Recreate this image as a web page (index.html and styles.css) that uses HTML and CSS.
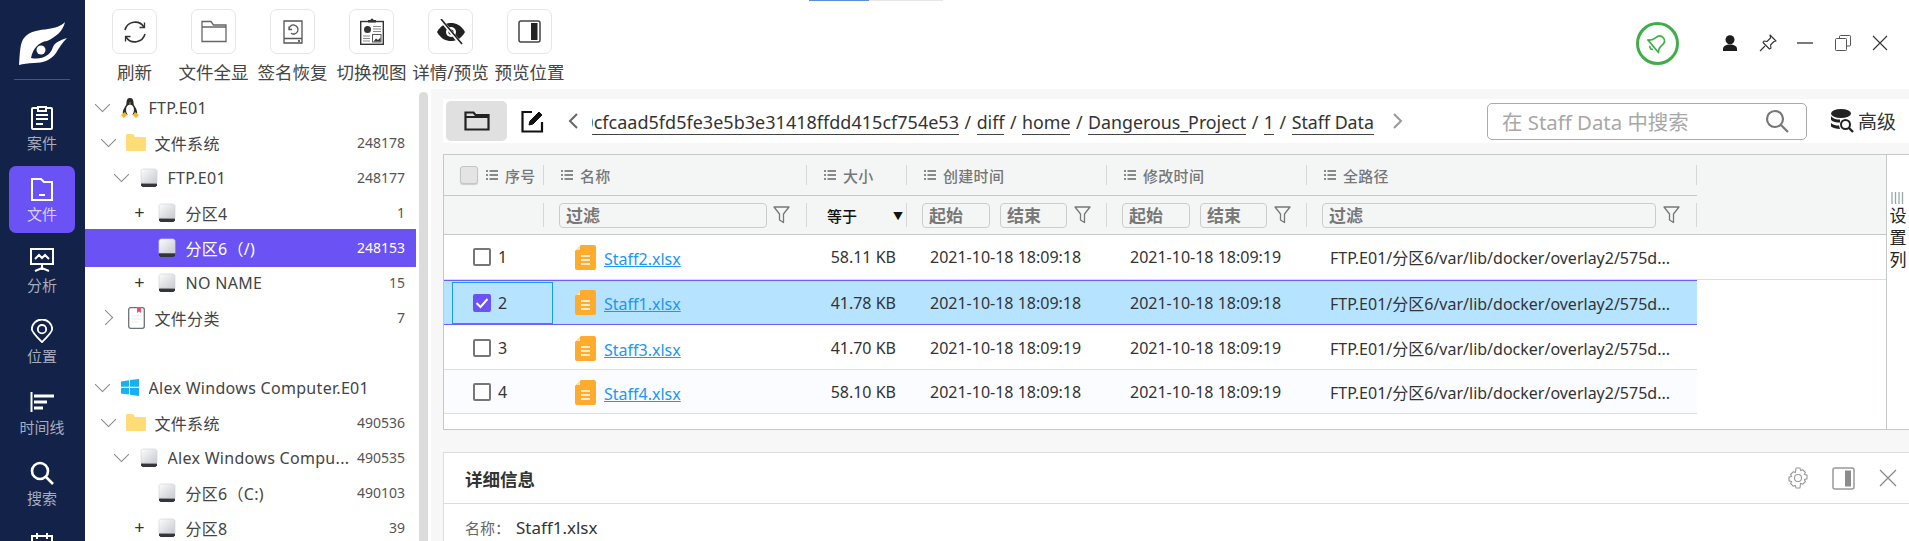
FILE: index.html
```html
<!DOCTYPE html>
<html lang="zh">
<head>
<meta charset="utf-8">
<title>文件</title>
<link rel="stylesheet" href="styles.css">
</head>
<body>
<svg class="sprite" aria-hidden="true">
  <symbol id="drive" viewBox="0 0 18 20">
    <defs><linearGradient id="dg" x1="0" y1="0" x2="1" y2="1"><stop offset="0" stop-color="#fdfdfd"/><stop offset="1" stop-color="#c6c9cf"/></linearGradient></defs>
    <path d="M2.500 1h13l1.500 1.500V15H1V2.500z" fill="url(#dg)" stroke="#d3d5d9" stroke-width=".7"/>
    <path d="M1 15.500h16v2l-1.500 1.500h-13L1 17.500z" fill="#33353a"/>
  </symbol>
  <symbol id="folderY" viewBox="0 0 20 17">
    <path d="M0 1.500C0 .6.600 0 1.500 0h5.500l2 3h9.500C19.400 3 20 3.600 20 4.500V15.500c0 .9-.6 1.500-1.500 1.500h-17C.6 17 0 16.400 0 15.500z" fill="#ffdc75"/>
  </symbol>
  <symbol id="list" viewBox="0 0 12 10">
    <path d="M0 1h2M3.500 1H12M0 5h2M3.500 5H12M0 9h2M3.500 9H12" stroke="#666" stroke-width="1.400" fill="none"/>
  </symbol>
  <symbol id="funnel" viewBox="0 0 17 18">
    <path d="M1 1h15l-5.500 7v8.500l-4-2.500V8z" fill="none" stroke="#777" stroke-width="1.300" stroke-linejoin="round"/>
  </symbol>
  <symbol id="xls" viewBox="0 0 21 25">
    <path d="M6 0h13a2 2 0 0 1 2 2v21a2 2 0 0 1-2 2H2a2 2 0 0 1-2-2V6z" fill="#ffab2e"/>
    <path d="M5 1v4H1z" fill="#ffe3b0"/>
    <path d="M6 11h9M6 15h9M6 19h9" stroke="#fff" stroke-width="1.400"/>
  </symbol>
</svg>

<div class="progress"><span class="progress-on"></span><span class="progress-off"></span></div>

<div class="app">
  <nav class="side">
    <div class="logo">
      <svg width="85" height="79" viewBox="0 0 85 79">
        <path d="M19 65C20 52 20 43 24 38 29 31 40 30 48 29 55 28 61 26 65 22 63 31 56 37 47 41 39 42 33 48 31 58 42 60 50 56 53 47 55 42 61 40 67 38 62 43 59 48 56 53 51 60 43 63 34 63 28 63 23 64 19 65z" fill="#fff"/>
        <circle cx="41" cy="50" r="4.500" fill="#fff"/>
      </svg>
      <div class="logo-rule"></div>
    </div>
    <a class="nav-item">
      <svg width="24" height="24" viewBox="0 0 24 24" fill="none" stroke="#fff" stroke-width="2"><path d="M8 2H3a1 1 0 0 0-1 1v19a1 1 0 0 0 1 1h18a1 1 0 0 0 1-1V3a1 1 0 0 0-1-1h-5M8 1h8v4H8zM6 9h12M6 13h12M6 18h7"/></svg>
      <span>案件</span>
    </a>
    <a class="nav-item nav-on">
      <svg width="24" height="24" viewBox="0 0 24 24" fill="none" stroke="#fff" stroke-width="2"><path d="M2 2h9l3 3h8v18H2zM9 18h6"/></svg>
      <span>文件</span>
    </a>
    <a class="nav-item">
      <svg width="26" height="24" viewBox="0 0 26 24" fill="none" stroke="#fff" stroke-width="2"><path d="M2 1h22v15H2zM13 16v6M6 23l7-3 7 3"/><path d="M6 11l4-4 3 3 3-3 4 4"/></svg>
      <span>分析</span>
    </a>
    <a class="nav-item">
      <svg width="24" height="26" viewBox="0 0 24 26" fill="none" stroke="#fff" stroke-width="2"><path d="M12 25C5 18 1 14 1 11a11 10.500 0 0 1 22 0c0 3-4 7-11 14z"/><circle cx="12" cy="11" r="4.500"/></svg>
      <span>位置</span>
    </a>
    <a class="nav-item">
      <svg width="25" height="20" viewBox="0 0 25 20" fill="none" stroke="#fff" stroke-width="3"><path d="M4 4h20M4 10h13M4 16h9"/><path d="M1.500 0v20" stroke-width="2"/></svg>
      <span>时间线</span>
    </a>
    <a class="nav-item">
      <svg width="24" height="24" viewBox="0 0 24 24" fill="none" stroke="#fff" stroke-width="2.600"><circle cx="10" cy="10" r="8"/><path d="M16 16l7 7"/></svg>
      <span>搜索</span>
    </a>
    <a class="nav-item">
      <svg width="22" height="24" viewBox="0 0 22 24" fill="none" stroke="#fff" stroke-width="2"><path d="M1 4h20v18H1zM6 1v6M16 1v6"/></svg>
    </a>
  </nav>

  <div class="body">
    <header class="top">
      <div class="tool">
        <div class="tool-btn"><svg width="26" height="26" viewBox="0 0 26 26" fill="none" stroke="#333" stroke-width="1.600"><path d="M3 11A10.500 10.500 0 0 1 22 8M23 15A10.500 10.500 0 0 1 4 18"/><path d="M22.500 3.500V8.500H17.500M3.500 22.500V17.500H8.500" stroke-width="1.300"/></svg></div>
        <span>刷新</span>
      </div>
      <div class="tool">
        <div class="tool-btn"><svg width="26" height="23" viewBox="0 0 26 23" fill="none" stroke="#666" stroke-width="1.300"><path d="M1 21.500V1.500h9l2.500 3.500H25v16.500zM1 7h24"/></svg></div>
        <span>文件全显</span>
      </div>
      <div class="tool">
        <div class="tool-btn"><svg width="20" height="24" viewBox="0 0 20 24" fill="none" stroke="#555" stroke-width="1.300"><path d="M1 1h18v22H1zM1 18.500h18"/><path d="M6 9.500a4.500 4.500 0 1 1 2 3.700M6 6.500v3h3"/><path d="M15 21h2" stroke="#333" stroke-width="1.500"/></svg></div>
        <span>签名恢复</span>
      </div>
      <div class="tool">
        <div class="tool-btn"><svg width="24" height="27" viewBox="0 0 24 27"><rect x=".7" y="3.500" width="22.600" height="22.800" fill="#fff" stroke="#333" stroke-width="1.400"/><path d="M8 4.500V2h2.500a1.500 1.500 0 0 1 3 0H16v2.500z" fill="#333"/><circle cx="7.500" cy="11.500" r="3.500" fill="#333"/><path d="M13 8.500h8M13 11h8M13 13.500h8M3 18h7M3 20.500h7M3 23h7" stroke="#888" stroke-width="1.200"/><rect x="12.500" y="16.500" width="8.500" height="7.500" fill="#fff" stroke="#555"/><path d="M13.500 23.500l2.500-3 2 1.500 2.500-2.500v4z" fill="#333"/></svg></div>
        <span>切换视图</span>
      </div>
      <div class="tool">
        <div class="tool-btn"><svg width="28" height="26" viewBox="0 0 28 26"><path d="M0 13C4 6 9 4 14 4s10 2 14 9c-4 7-9 9-14 9S4 20 0 13z" fill="#222"/><circle cx="14" cy="13" r="5" fill="#fff"/><circle cx="14" cy="13" r="2.600" fill="#222"/><path d="M4 1l20 24" stroke="#fff" stroke-width="3.500"/><path d="M4 0l21 25" stroke="#222" stroke-width="1.600"/></svg></div>
        <span>详情/预览</span>
      </div>
      <div class="tool">
        <div class="tool-btn"><svg width="23" height="23" viewBox="0 0 23 23"><rect x="1" y="1" width="21" height="21" rx="2" fill="#fff" stroke="#444" stroke-width="1.500"/><rect x="13" y="3" width="6.500" height="17" fill="#222"/></svg></div>
        <span>预览位置</span>
      </div>
      <div class="win">
        <div class="bell"><svg width="22" height="22" viewBox="0 0 20 20" fill="none" stroke="#3fae49" stroke-width="1.500" stroke-linejoin="round"><g transform="rotate(50 10 10)"><path d="M10 2.500C6.500 2.500 5.500 5 5.500 8c0 3-1 5-3 6.500h15c-2-1.500-3-3.500-3-6.500 0-3-1-5.500-4.500-5.500z"/><path d="M8 16.500a2.200 2.200 0 0 0 4 0"/></g></svg></div>
        <div class="win-btn"><svg width="16" height="16" viewBox="0 0 16 16" fill="#1c1c1c"><circle cx="8" cy="4.700" r="4.500"/><path d="M1 16v-2c0-3 3-4.500 7-4.500s7 1.500 7 4.500v2z"/></svg></div>
        <div class="win-btn"><svg width="18" height="18" viewBox="0 0 18 18" fill="none" stroke="#333" stroke-width="1.100" stroke-linejoin="round"><path d="M11 1l6 6-2 .5-3.500 3.500.5 3-1.500 1L4 8.500l1-1.500 3 .5L11.500 4z"/><path d="M6 12l-5 5"/></svg></div>
        <div class="win-btn"><svg width="16" height="16" viewBox="0 0 16 16" stroke="#333" stroke-width="1.300"><path d="M0 8h16"/></svg></div>
        <div class="win-btn"><svg width="16" height="16" viewBox="0 0 16 16" fill="#fff" stroke="#555" stroke-width="1"><path d="M4.500 11V1.500a1 1 0 0 1 1-1h9a1 1 0 0 1 1 1V10a1 1 0 0 1-1 1z"/><rect x=".5" y="3.500" width="11" height="12" rx="1"/></svg></div>
        <div class="win-btn"><svg width="16" height="16" viewBox="0 0 16 16" stroke="#333" stroke-width="1.100"><path d="M1 1l14 14M15 1L1 15"/></svg></div>
      </div>
    </header>

    <div class="content">
      <aside class="tree">
        <div class="row l1">
          <span class="tg chev-d"></span>
          <span class="ti"><svg width="18" height="20" viewBox="0 0 18 20"><path d="M9 0c2.500 0 3.500 2 3.500 4.500 0 2.500 1 3.500 2.500 6 1 2 1.500 4 1 6H2c-.5-2 0-4 1-6 1.500-2.500 2.500-3.500 2.500-6C5.500 2 6.500 0 9 0z" fill="#2a2a2a"/><ellipse cx="9" cy="12" rx="4" ry="5.500" fill="#fff"/><path d="M0 17l4-3 2 3-3 3zM18 17l-4-3-2 3 3 3zM8 4.500h2L9 6z" fill="#f5b81f"/></svg></span>
          <span class="tx">FTP.E01</span>
        </div>
        <div class="row l2">
          <span class="tg chev-d"></span>
          <span class="ti"><svg width="20" height="17"><use href="#folderY"/></svg></span>
          <span class="tx">文件系统</span><span class="ct">248178</span>
        </div>
        <div class="row l3">
          <span class="tg chev-d"></span>
          <span class="ti"><svg width="18" height="20"><use href="#drive"/></svg></span>
          <span class="tx">FTP.E01</span><span class="ct">248177</span>
        </div>
        <div class="row l4">
          <span class="tg plus">+</span>
          <span class="ti"><svg width="18" height="20"><use href="#drive"/></svg></span>
          <span class="tx">分区4</span><span class="ct">1</span>
        </div>
        <div class="row l4 row-on">
          <span class="tg"></span>
          <span class="ti"><svg width="18" height="20"><use href="#drive"/></svg></span>
          <span class="tx">分区6（/)</span><span class="ct">248153</span>
        </div>
        <div class="row l4">
          <span class="tg plus">+</span>
          <span class="ti"><svg width="18" height="20"><use href="#drive"/></svg></span>
          <span class="tx">NO NAME</span><span class="ct">15</span>
        </div>
        <div class="row l2">
          <span class="tg chev-r"></span>
          <span class="ti"><svg width="17" height="22" viewBox="0 0 17 22"><rect x=".7" y=".7" width="15.600" height="20.600" rx="2" fill="#fff" stroke="#6b7278" stroke-width="1.300"/><path d="M9 0h4v6l-2-1.500L9 6z" fill="#ef4d6d"/><path d="M3.500 9h10M3.500 12h10M3.500 15h7" stroke="#e3ebf3"/></svg></span>
          <span class="tx">文件分类</span><span class="ct">7</span>
        </div>
        <div class="row"></div>
        <div class="row l1">
          <span class="tg chev-d"></span>
          <span class="ti"><svg width="18" height="17" viewBox="0 0 18 17" fill="#16b1f0"><path d="M0 2.500L8 1.300v6.500H0zM9 1.100L18 0v7.800H9zM0 9h8v6.500L0 14.500zM9 9h9v8L9 15.800z"/></svg></span>
          <span class="tx">Alex Windows Computer.E01</span>
        </div>
        <div class="row l2">
          <span class="tg chev-d"></span>
          <span class="ti"><svg width="20" height="17"><use href="#folderY"/></svg></span>
          <span class="tx">文件系统</span><span class="ct">490536</span>
        </div>
        <div class="row l3">
          <span class="tg chev-d"></span>
          <span class="ti"><svg width="18" height="20"><use href="#drive"/></svg></span>
          <span class="tx">Alex Windows Compu...</span><span class="ct">490535</span>
        </div>
        <div class="row l4">
          <span class="tg"></span>
          <span class="ti"><svg width="18" height="20"><use href="#drive"/></svg></span>
          <span class="tx">分区6（C:)</span><span class="ct">490103</span>
        </div>
        <div class="row l4">
          <span class="tg plus">+</span>
          <span class="ti"><svg width="18" height="20"><use href="#drive"/></svg></span>
          <span class="tx">分区8</span><span class="ct">39</span>
        </div>
      </aside>
      <div class="scroll"><div class="scroll-thumb"></div></div>

      <main class="main">
        <div class="crumbs">
          <div class="folder-btn"><svg width="26" height="20" viewBox="0 0 26 20" fill="none" stroke="#222" stroke-width="2.200"><path d="M1.500 18.500V1.500h8l2 2.500h13v14.500zM1.500 6h23"/></svg></div>
          <svg class="edit" width="23" height="23" viewBox="0 0 23 23" fill="none" stroke="#111" stroke-width="2.200"><path d="M11 2H1.500v19.500H21V12"/><path d="M8 15l1-4L18 2l3 3-9 9z" fill="#111" stroke-width="1"/></svg>
          <svg class="chev" width="10" height="16" viewBox="0 0 10 16" fill="none" stroke="#666" stroke-width="2"><path d="M9 1L2 8l7 7"/></svg>
          <div class="path">
            <a class="hash">b50cfcaad5fd5fe3e5b3e31418ffdd415cf754e53</a><i>/</i><a>diff</a><i>/</i><a>home</a><i>/</i><a>Dangerous_Project</a><i>/</i><a>1</a><i>/</i><a>Staff Data</a>
          </div>
          <svg class="chev2" width="10" height="16" viewBox="0 0 10 16" fill="none" stroke="#999" stroke-width="2"><path d="M1 1l7 7-7 7"/></svg>
          <div class="search">
            <span>在 Staff Data 中搜索</span>
            <svg width="24" height="24" viewBox="0 0 24 24" fill="none" stroke="#777" stroke-width="2.200"><circle cx="10" cy="10" r="8"/><path d="M16 16l7 7"/></svg>
          </div>
          <div class="adv">
            <svg width="24" height="24" viewBox="0 0 24 24"><ellipse cx="11" cy="4.500" rx="10" ry="4.500" fill="#222"/><path d="M1 7c2 3 6 3.500 9 3.500v3C6 13.500 3 13 1 11zM1 14c2 2 5 2.500 8 2.500l1 3.500c-4 0-7-1-9-2.500z" fill="#222"/><circle cx="15.500" cy="15.500" r="4.500" fill="#fff" stroke="#222" stroke-width="2"/><path d="M19 19l4 4" stroke="#222" stroke-width="2.400"/></svg>
            <span>高级</span>
          </div>
        </div>

        <section class="grid-wrap">
          <div class="grid">
            <div class="g-head">
              <div class="h-cell c1"><span class="chk chk-head"></span><svg class="li" width="12" height="10"><use href="#list"/></svg>序号</div>
              <div class="h-cell c2"><svg class="li" width="12" height="10"><use href="#list"/></svg>名称</div>
              <div class="h-cell c3"><svg class="li" width="12" height="10"><use href="#list"/></svg>大小</div>
              <div class="h-cell c4"><svg class="li" width="12" height="10"><use href="#list"/></svg>创建时间</div>
              <div class="h-cell c4"><svg class="li" width="12" height="10"><use href="#list"/></svg>修改时间</div>
              <div class="h-cell c6"><svg class="li" width="12" height="10"><use href="#list"/></svg>全路径</div>
            </div>
            <div class="g-filter">
              <div class="f-cell c1"></div>
              <div class="f-cell c2"><span class="inp grow">过滤</span><svg class="fn" width="17" height="18"><use href="#funnel"/></svg></div>
              <div class="f-cell c3"><span class="eq">等于</span><span class="arr">▼</span></div>
              <div class="f-cell c4"><span class="inp w68">起始</span><span class="inp w67">结束</span><svg class="fn" width="17" height="18"><use href="#funnel"/></svg></div>
              <div class="f-cell c4"><span class="inp w68">起始</span><span class="inp w67">结束</span><svg class="fn" width="17" height="18"><use href="#funnel"/></svg></div>
              <div class="f-cell c6"><span class="inp grow">过滤</span><svg class="fn" width="17" height="18"><use href="#funnel"/></svg></div>
            </div>
            <div class="g-row">
              <div class="d c1"><span class="chk"></span>1</div>
              <div class="d c2"><svg class="xl" width="21" height="25"><use href="#xls"/></svg><a class="lnk">Staff2.xlsx</a></div>
              <div class="d c3 num">58.11 KB</div>
              <div class="d c4">2021-10-18 18:09:18</div>
              <div class="d c4">2021-10-18 18:09:19</div>
              <div class="d c6">FTP.E01/分区6/var/lib/docker/overlay2/575d...</div>
            </div>
            <div class="g-row g-sel">
              <div class="d c1 focus"><span class="chk chk-on"><svg width="14" height="12" viewBox="0 0 14 12" fill="none" stroke="#fff" stroke-width="2"><path d="M1.500 6l4 4 7-8"/></svg></span>2</div>
              <div class="d c2"><svg class="xl" width="21" height="25"><use href="#xls"/></svg><a class="lnk">Staff1.xlsx</a></div>
              <div class="d c3 num">41.78 KB</div>
              <div class="d c4">2021-10-18 18:09:18</div>
              <div class="d c4">2021-10-18 18:09:18</div>
              <div class="d c6">FTP.E01/分区6/var/lib/docker/overlay2/575d...</div>
            </div>
            <div class="g-row g-low">
              <div class="d c1"><span class="chk"></span>3</div>
              <div class="d c2"><svg class="xl" width="21" height="25"><use href="#xls"/></svg><a class="lnk">Staff3.xlsx</a></div>
              <div class="d c3 num">41.70 KB</div>
              <div class="d c4">2021-10-18 18:09:19</div>
              <div class="d c4">2021-10-18 18:09:19</div>
              <div class="d c6">FTP.E01/分区6/var/lib/docker/overlay2/575d...</div>
            </div>
            <div class="g-row g-alt">
              <div class="d c1"><span class="chk"></span>4</div>
              <div class="d c2"><svg class="xl" width="21" height="25"><use href="#xls"/></svg><a class="lnk">Staff4.xlsx</a></div>
              <div class="d c3 num">58.10 KB</div>
              <div class="d c4">2021-10-18 18:09:18</div>
              <div class="d c4">2021-10-18 18:09:19</div>
              <div class="d c6">FTP.E01/分区6/var/lib/docker/overlay2/575d...</div>
            </div>
          </div>
          <div class="cols">
            <svg width="14" height="12" viewBox="0 0 14 12" stroke="#9aa7a7" stroke-width="1.300"><path d="M1 0v12M4.500 0v12M8 0v12M11.500 0v12"/></svg>
            <span>设置列</span>
          </div>
        </section>

        <section class="detail">
          <div class="d-head">
            <span class="d-title">详细信息</span>
            <svg width="22" height="22" viewBox="0 0 22 22" fill="none" stroke="#9a9a9a" stroke-width="1.100" stroke-linejoin="round"><path d="M9 1h4l.6 2.600 2-.9 2.800 2.800-1.100 2 2.700.6v3.800l-2.700.6 1.100 2-2.800 2.800-2-1L13 21H9l-.6-2.700-2 1-2.800-2.800 1.100-2L2 13.900V10.100l2.700-.6-1.100-2 2.800-2.800 2 .9z"/><circle cx="11" cy="11" r="3.500"/></svg>
            <svg class="d-pane" width="23" height="23" viewBox="0 0 23 23"><rect x="1" y="1" width="21" height="21" rx="2" fill="#fff" stroke="#999" stroke-width="1.500"/><rect x="13" y="3.500" width="6" height="16" fill="#8c8c8c"/></svg>
            <svg class="d-x" width="18" height="18" viewBox="0 0 18 18" stroke="#888" stroke-width="1.200"><path d="M1 1l16 16M17 1L1 17"/></svg>
          </div>
          <div class="d-body"><span class="d-key">名称：</span><span class="d-val">Staff1.xlsx</span></div>
        </section>
      </main>
    </div>
  </div>
</div>
</body>
</html>
```

FILE: styles.css
```css
* { box-sizing: border-box; }
html, body { margin: 0; height: 100%; overflow: hidden; }
body { font-family: "Noto Sans", "Noto Sans CJK SC", sans-serif; color: #333; background: #fff; }
.sprite { position: absolute; width: 0; height: 0; }
a { text-decoration: none; }

.progress { position: absolute; top: 0; left: 809px; height: 1px; display: flex; }
.progress-on { width: 60px; background: #5b8ed6; }
.progress-off { width: 74px; background: #e6e6e6; }

.app { display: flex; height: 541px; overflow: hidden; }

.side { width: 85px; flex: none; background: #132248; overflow: hidden; display: flex; flex-direction: column; gap: 4px; }
.logo { height: 91px; flex: none; }
.logo svg { display: block; }
.logo-rule { height: 1px; margin: 0 15px 0 14px; background: #44557f; }
.nav-item { flex: none; height: 67px; width: 66px; margin-left: 9px; border-radius: 7px; padding-top: 11px; display: flex; flex-direction: column; align-items: center; color: #a6adbd; font-size: 15px; line-height: 20px; }
.nav-item svg { height: 24px; display: block; }
.nav-item span { margin-top: 3px; white-space: nowrap; }
.nav-on { background: #6b52f5; color: #d8d0ff; }

.body { flex: 1; min-width: 0; display: flex; flex-direction: column; }

.top { height: 89px; flex: none; display: flex; padding-left: 10px; }
.tool { width: 79px; display: flex; flex-direction: column; align-items: center; padding-top: 9px; color: #444; font-size: 17.500px; line-height: 24px; white-space: nowrap; }
.tool-btn { width: 45px; height: 45px; border: 1px solid #e6e6e6; border-radius: 7px; display: flex; align-items: center; justify-content: center; margin-bottom: 6px; }
.win { margin-left: auto; display: flex; align-items: center; padding: 0 14px 3px 0; gap: 7.500px; }
.bell { width: 43px; height: 43px; border: 3.500px solid #3fae49; border-radius: 50%; margin-right: 29px; display: flex; align-items: center; justify-content: center; }
.win-btn { width: 30px; height: 30px; display: flex; align-items: center; justify-content: center; }

.content { flex: 1; min-height: 0; display: flex; }

.tree { width: 331px; flex: none; padding-top: 1px; overflow: hidden; }
.row { height: 35px; display: flex; align-items: center; font-size: 16px; color: #444; padding-right: 11px; white-space: nowrap; letter-spacing: .3px; }
.l1 { padding-left: 10px; }
.l2 { padding-left: 16px; }
.l3 { padding-left: 29px; }
.l4 { padding-left: 47px; }
.tg { width: 15px; height: 15px; flex: none; display: flex; align-items: center; justify-content: center; }
.plus { font-size: 18px; color: #333; line-height: 15px; }
.chev-d::before { content: ""; width: 10px; height: 10px; border: solid #888; border-width: 0 1px 1px 0; transform: translateY(-3px) rotate(45deg); }
.chev-r::before { content: ""; width: 10px; height: 10px; border: solid #888; border-width: 1px 1px 0 0; transform: translateX(-3px) rotate(45deg); }
.ti { width: 20px; flex: none; margin: 0 8.500px 0 10px; display: flex; align-items: center; justify-content: center; }
.ti svg { display: block; }
.tx { flex: 1; min-width: 0; overflow: hidden; }
.ct { font-size: 14px; color: #555; margin-left: 4px; letter-spacing: 0; }
.row-on { background: #6b52f5; color: #fff; height: 38px; margin: -1.500px 0; position: relative; }
.row-on .ct { color: #fff; }

.scroll { width: 15px; flex: none; padding: 3px 3px 0 3px; }
.scroll-thumb { height: 100%; background: #dcdcdc; border-radius: 5px 5px 0 0; }

.main { flex: 1; min-width: 0; background: #f7f7f7; padding: 10px 0 0 12px; display: flex; flex-direction: column; overflow: hidden; }

.crumbs { height: 44px; flex: none; background: #fff; display: flex; align-items: center; padding-left: 3px; }
.folder-btn { width: 61px; height: 40px; background: #e0e0e0; border-radius: 5px; display: flex; align-items: center; justify-content: center; flex: none; }
.edit { margin-left: 14px; flex: none; }
.chev { margin-left: 24px; flex: none; }
.path { width: 782px; margin: 3px 0 0 14px; flex: none; display: flex; justify-content: flex-end; overflow: hidden; font-size: 17.800px; line-height: 24px; white-space: nowrap; color: #333; }
.path a { flex: none; border-bottom: 1px solid #444; }
.path .hash { font-size: 18px; letter-spacing: .02px; }
.path i { flex: none; font-style: normal; margin: 0 5.500px; }
.chev2 { margin-left: 19px; flex: none; }
.search { width: 320px; height: 37px; margin-left: 84px; flex: none; border: 1px solid #aaa; border-radius: 5px; display: flex; align-items: center; justify-content: space-between; padding: 0 17px 0 14px; color: #a8a8a8; font-size: 20.400px; white-space: nowrap; }
.adv { display: flex; align-items: center; gap: 4px; margin-left: 23px; font-size: 19px; color: #333; white-space: nowrap; }

.grid-wrap { height: 276px; flex: none; margin-top: 11px; background: #fff; border: 1px solid #c5c9c9; border-right: 0; display: flex; }
.grid { width: 1442px; flex: none; }
.g-head, .g-filter { background: #f4f6f6; display: flex; font-size: 15px; width: 1442px; }
.g-head { height: 41px; }
.g-filter { height: 39px; border-bottom: 1px solid #c5c9c9; }
.c1 { width: 100px; }
.c2 { width: 263px; }
.c3 { width: 100px; }
.c4 { width: 200px; }
.c6 { width: 390px; }
.h-cell, .f-cell, .d { flex: none; display: flex; align-items: center; white-space: nowrap; }
.h-cell { padding-left: 17px; color: #777; font-weight: 500; letter-spacing: .3px; position: relative; border-bottom: 1px solid #c5c9c9; }
.h-cell.c1 { padding-left: 16px; }
.h-cell::after, .f-cell::after { content: ""; position: absolute; right: 0; top: 10px; bottom: 10px; width: 1px; background: #d4d8d8; }
.f-cell { position: relative; padding-left: 15px; }
.f-cell::after { top: 7px; bottom: 7px; }
.li { margin-right: 7px; flex: none; }
.inp { height: 25px; border: 1px solid #ccc; border-radius: 4px; font-size: 17px; font-weight: 700; color: #777; padding-left: 6px; line-height: 23px; flex: none; }
.grow { flex: 1; margin-right: 7px; }
.c2 .grow { margin-right: 6px; }
.w68 { width: 68px; margin-right: 10px; }
.w67 { width: 67px; margin-right: 7px; }
.fn { flex: none; margin-right: 17px; }
.eq { margin-left: 5px; font-weight: 500; color: #111; }
.arr { margin-left: auto; margin-right: 4px; font-size: 10px; color: #111; }

.g-row { height: 45px; display: flex; background: #fff; border-bottom: 1px solid #ddd; font-size: 16px; color: #333; }
.g-low { padding-top: 2px; }
.g-alt { background: #fbfcff; height: 44px; padding-top: 1px; width: 1253px; }
.g-low { width: 1253px; }
.g-row:first-of-type { width: 1253px; }
.g-sel { background: #b6e3ff; border-top: 1px solid #6a5cff; border-bottom: 1px solid #6a5cff; width: 1253px; }
.d { padding-left: 23px; overflow: hidden; }
.d.c1 { padding-left: 29px; }
.d.c2 { padding-left: 31px; }
.num { justify-content: flex-end; padding: 0 11px 0 0; }
.focus { position: relative; overflow: visible; }
.focus::before { content: ""; position: absolute; left: 8px; top: 1px; bottom: 0; width: 99px; border: 1px solid #1a9be8; }
.chk { width: 18px; height: 18px; border: 2px solid #777; border-radius: 2px; margin-right: 7px; flex: none; background: #fff; display: flex; align-items: center; justify-content: center; }
.chk-head { background: #e4e4e4; border: 1px solid #c4c4c4; border-radius: 3px; margin-right: 8px; box-shadow: 0 1px 1px #ccc; }
.chk-on { background: #6b52f5; border-color: #6b52f5; }
.xl { flex: none; margin-right: 8px; }
.lnk { color: #2196f3; text-decoration: underline; margin-top: 3px; }

.cols { width: 23px; flex: none; border-left: 1px solid #c5c9c9; display: flex; flex-direction: column; align-items: center; padding-top: 37px; font-size: 17px; line-height: 22px; color: #222; }
.cols span { width: 17px; margin-top: 1px; }

.detail { flex: 1; margin-top: 22px; background: #fff; border: solid #ddd; border-width: 1px 0 0 1px; }
.d-head { height: 51px; border-bottom: 1px solid #ddd; display: flex; align-items: center; padding: 0 12px 0 21px; }
.d-title { font-size: 17.500px; font-weight: 700; color: #333; margin-right: auto; }
.d-pane { margin-left: 23px; }
.d-x { margin-left: 24px; }
.d-body { padding: 9px 0 0 21px; display: flex; align-items: center; line-height: 30px; }
.d-key { font-size: 15px; color: #666; width: 51px; }
.d-val { font-size: 17px; color: #333; }
```
